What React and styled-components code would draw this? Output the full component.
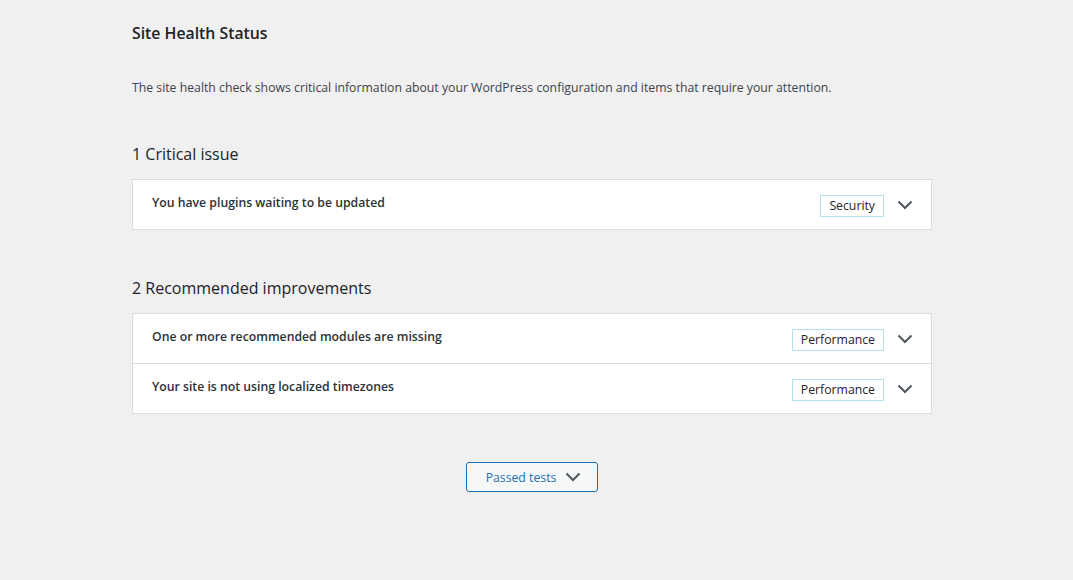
import React from 'react';
import styled, { createGlobalStyle } from 'styled-components';

const GlobalStyle = createGlobalStyle`
    body {
        margin: 0;
        background: #f0f0f1;
        font-family: "Open Sans", "Noto Sans", sans-serif;
        color: #1d2327;
    }
`;

const critical = [
    { title: 'You have plugins waiting to be updated', badge: 'Security' },
];

const recommended = [
    { title: 'One or more recommended modules are missing', badge: 'Performance' },
    { title: 'Your site is not using localized timezones', badge: 'Performance' },
];

export default function App() {
    return (
        <>
            <GlobalStyle />
            <HealthPage>
                <Title>Site Health Status</Title>
                <Intro>
                    The site health check shows critical information about your WordPress configuration and items that require your attention.
                </Intro>

                <IssueGroup title="1 Critical issue" items={critical} />
                <IssueGroup title="2 Recommended improvements" items={recommended} />

                <Footer>
                    <PassedButton>
                        Passed tests
                        <Chevron />
                    </PassedButton>
                </Footer>
            </HealthPage>
        </>
    );
}

function IssueGroup({ title, items }) {
    return (
        <Group>
            <GroupTitle>{title}</GroupTitle>
            <Accordion>
                {items.map((item) => (
                    <Row key={item.title}>
                        <RowTitle>{item.title}</RowTitle>
                        <Badge>{item.badge}</Badge>
                        <Chevron />
                    </Row>
                ))}
            </Accordion>
        </Group>
    );
}

function Chevron() {
    return (
        <ChevronIcon viewBox="0 0 16 10" width="16" height="10">
            <path d="M1.5 1.5 L8 8 L14.5 1.5" fill="none" stroke="#50575e" strokeWidth="2" />
        </ChevronIcon>
    );
}

const HealthPage = styled.main`
    width: 800px;
    margin-left: 132px;
    padding-top: 22px;
`;

const Title = styled.h1`
    margin: 0;
    font-size: 15.8px;
    font-weight: 600;
    line-height: 22px;
    color: #1d2327;
`;

const Intro = styled.p`
    margin: 35px 0 0;
    font-size: 12.25px;
    line-height: 18px;
    color: #3c434a;
`;

const Group = styled.section`
    margin-top: 46px;

    & + & {
        margin-top: 47px;
    }
`;

const GroupTitle = styled.h2`
    margin: 0 0 14px;
    font-size: 16px;
    font-weight: 400;
    line-height: 22px;
    color: #1d2327;
`;

const Accordion = styled.div`
    background: #fff;
    border: 1px solid #dcdcde;
`;

const Row = styled.div`
    display: flex;
    align-items: center;
    height: 49px;
    padding: 0 18px 0 19px;

    & + & {
        border-top: 1px solid #dcdcde;
    }
`;

const RowTitle = styled.span`
    flex: 1;
    font-size: 12.25px;
    font-weight: 600;
    color: #2c3338;
    margin-top: -4px;
`;

const Badge = styled.span`
    display: inline-flex;
    align-items: center;
    height: 20px;
    padding: 0 8px;
    border: 1px solid #b6dfed;
    font-size: 12.25px;
    color: #1d2327;
    margin-right: 13px;
    margin-top: 2px;
`;

const ChevronIcon = styled.svg`
    display: block;
    flex: none;
`;

const Footer = styled.div`
    display: flex;
    justify-content: center;
    margin-top: 48px;
`;

const PassedButton = styled.button`
    display: inline-flex;
    align-items: center;
    gap: 9px;
    height: 30px;
    padding: 0 16px 0 19px;
    background: #f6f7f7;
    border: 1px solid #2271b1;
    border-radius: 3px;
    font-family: inherit;
    font-size: 12.25px;
    color: #2271b1;
    cursor: pointer;
`;
